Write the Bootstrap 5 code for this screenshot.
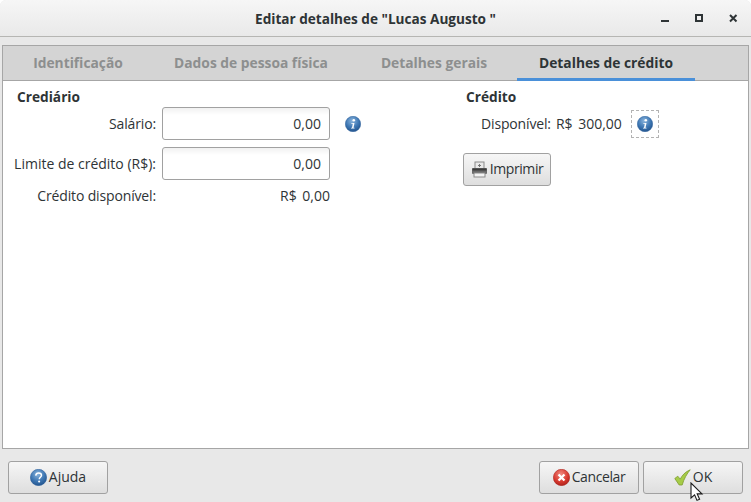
<!DOCTYPE html>
<html lang="pt-BR">
<head>
<meta charset="utf-8">
<title>Editar detalhes</title>
<link href="https://cdn.jsdelivr.net/npm/bootstrap@5.3.0/dist/css/bootstrap.min.css" rel="stylesheet">
<style>
html,body{margin:0;background:#fff;height:502px;overflow:hidden}
body{font-family:"Open Sans","Noto Sans",sans-serif;font-size:14px;color:#2e3436;line-height:18px}
.dlg{width:751px;height:502px;background:#e8e8e8;position:relative;border-radius:6px 6px 0 0}
.ttl{height:37px;flex:none;background:linear-gradient(#f6f6f6,#e9e9e9);border-bottom:1px solid #b6b6b3;border-radius:6px 6px 0 0;position:relative}
.ttl-text{font-weight:700;font-size:13.6px;color:#2e3436;margin-top:1px}
.winbtns{position:absolute;left:651px;top:0;height:36px;width:100px}
.nb{margin:8px 2px 0 2px;height:404px;flex:none;border:1px solid #a6a6a6;background:#fff}
.tabbar{height:35px;background:#d4d4d4;border-bottom:1px solid #a6a6a6;padding-left:2px;flex:none}
.tabx{height:34px;line-height:33px;font-weight:700;font-size:13.8px;color:#8d8f8f;text-align:center;flex:none}
.tabx.on{color:#2e3436;border-bottom:3px solid #4a90d9;height:35px;line-height:33px;margin-bottom:-1px}
.t1{width:146px}.t2{width:200px}.t3{width:166px}.t4{width:178px}
.body-area{flex:1;padding-top:7px}
.lcol{width:452px;flex:none;padding-left:11px}
.rcol{flex:1;padding-left:11px}
.hd{font-weight:700;color:#2e3436;font-size:13.7px;line-height:18px}
.hd-l{margin-bottom:1px;padding-left:3px}
.hd-r{margin-bottom:4px}
.fgrid{display:grid;grid-template-columns:142px 168px 16px;column-gap:6px;row-gap:7px;align-items:center}
.fgrid .lb{text-align:right;white-space:nowrap}
.tight{letter-spacing:-.15px}
.wide{word-spacing:2px}
.entry{height:33px;border:1px solid #a1a1a1;border-radius:3px;background:linear-gradient(#f1f1f1,#fff 7px);text-align:right;padding:6px 8px 0 0;line-height:19px}
.gi{margin-left:9px;width:16px;height:16px;display:block}
.disp{padding-left:15px}
.val{margin-left:5px}
.btnx{border:1px solid #a1a1a1;border-radius:3px;background:linear-gradient(#f6f6f6,#dedede);color:#2e3436;font-size:14px;height:33px;padding:0 0 2px;display:flex;align-items:center;justify-content:center}
.btnx svg{margin-right:2px;margin-top:2px}
.narrow{letter-spacing:-.4px}
.pbtn{width:88px;margin-left:-3px;margin-top:15px}
.dots{width:28px;height:28px;border:1px dashed #b3b3b3;display:flex;align-items:center;justify-content:center;margin-left:9px}
.foot{padding:12px 8px 0 8px;flex:1}
.fb{width:100px}
.cursor{position:absolute;left:690px;top:482px;width:14px;height:20px}
</style>
</head>
<body>
<svg width="0" height="0" class="d-block position-absolute">
<defs>
<radialGradient id="blu" cx="45%" cy="30%" r="75%"><stop offset="0" stop-color="#8ab4dc"/><stop offset=".55" stop-color="#3f78b4"/><stop offset="1" stop-color="#1f4f88"/></radialGradient>
<radialGradient id="red" cx="45%" cy="30%" r="75%"><stop offset="0" stop-color="#f08a80"/><stop offset=".6" stop-color="#d83a30"/><stop offset="1" stop-color="#a81f18"/></radialGradient>
<symbol id="info" viewBox="0 0 16 16"><circle cx="8" cy="8" r="7.7" fill="url(#blu)" stroke="#2b5f9a" stroke-width=".5"/><circle cx="8.8" cy="4.3" r="1.3" fill="#fff"/><path d="M6.4 7h3.1l-1 4.7h1v.8H6l.1-.8h.9l.8-3.9h-1.5z" fill="#fff"/></symbol>
</defs>
</svg>
<div class="dlg d-flex flex-column">
  <div class="ttl d-flex align-items-center justify-content-center">
    <span class="ttl-text">Editar detalhes de "Lucas Augusto "</span>
    <div class="winbtns">
      <svg width="100" height="36"><rect x="10" y="20" width="8" height="2" fill="#2e3436"/><rect x="45" y="15" width="6" height="6" fill="none" stroke="#2e3436" stroke-width="2"/><path d="M79 15l6.5 6.5M85.5 15L79 21.5" stroke="#2e3436" stroke-width="2"/></svg>
    </div>
  </div>
  <div class="nb d-flex flex-column">
    <div class="tabbar d-flex">
      <div class="tabx t1">Identificação</div>
      <div class="tabx t2">Dados de pessoa física</div>
      <div class="tabx t3">Detalhes gerais</div>
      <div class="tabx t4 on">Detalhes de crédito</div>
    </div>
    <div class="body-area d-flex">
      <div class="lcol">
        <div class="hd hd-l">Crediário</div>
        <div class="fgrid">
          <div class="lb tight">Salário:</div><div class="entry">0,00</div><svg class="gi"><use href="#info"/></svg>
          <div class="lb">Limite de crédito (R$):</div><div class="entry">0,00</div><div></div>
          <div class="lb tight">Crédito disponível:</div><div class="text-end wide">R$ 0,00</div><div></div>
        </div>
      </div>
      <div class="rcol">
        <div class="hd hd-r">Crédito</div>
        <div class="d-flex align-items-center disp">
          <span class="tight">Disponível:</span><span class="val wide">R$ 300,00</span>
          <span class="dots"><svg width="16" height="16"><use href="#info"/></svg></span>
        </div>
        <button class="btnx pbtn" type="button">
          <svg width="17" height="17" viewBox="0 0 17 17"><rect x="4" y="1" width="9" height="7" fill="#e8e8e8" stroke="#8b8b8b"/><path d="M7 4.5h3M8.5 3v3" stroke="#777"/><rect x="1" y="7" width="15" height="6" rx="1" fill="#6a6a6a"/><rect x="1.5" y="7.5" width="14" height="2" fill="#3b3b3b"/><rect x="3" y="12" width="11" height="4" fill="#f3f3f3" stroke="#8b8b8b"/></svg><span class="narrow">Imprimir</span>
        </button>
      </div>
    </div>
  </div>
  <div class="foot d-flex justify-content-between">
    <button class="btnx fb" type="button">
      <svg width="17" height="17" viewBox="0 0 16 16"><circle cx="8" cy="8" r="7.7" fill="url(#blu)" stroke="#2b5f9a" stroke-width=".5"/><path d="M5.4 6.2C5.5 4.5 6.7 3.7 8.2 3.7c1.6 0 2.6 1 2.6 2.2 0 1.9-2.1 1.9-2.1 3.7" fill="none" stroke="#fff" stroke-width="1.4"/><circle cx="8.6" cy="11.8" r="1" fill="#fff"/></svg><span>Ajuda</span>
    </button>
    <div class="d-flex gap-1">
      <button class="btnx fb" type="button">
        <svg width="17" height="17" viewBox="0 0 16 16"><circle cx="8" cy="8" r="7.7" fill="url(#red)" stroke="#a81f18" stroke-width=".5"/><path d="M5.2 5.2l5.6 5.6M10.8 5.2l-5.6 5.6" stroke="#fff" stroke-width="2.2"/></svg><span class="narrow">Cancelar</span>
      </button>
      <button class="btnx fb" type="button">
        <svg width="17" height="17" viewBox="0 0 17 17"><path d="M.8 9.5l3-2.3 2.4 3C8 6.5 11.2 2.8 16.2.8c-3 3.6-6.4 9-8 15.2H5.2z" fill="#a6cc48" stroke="#7c9c30" stroke-width=".8"/></svg><span>OK</span>
      </button>
    </div>
  </div>
  <svg class="cursor" viewBox="0 0 14 20"><path d="M1 1v15l3.6-3.2 2.4 5.6 2.6-1.1-2.4-5.4h4.8z" fill="#fff" stroke="#1a1a1a" stroke-width="1.1"/></svg>
</div>
</body>
</html>
